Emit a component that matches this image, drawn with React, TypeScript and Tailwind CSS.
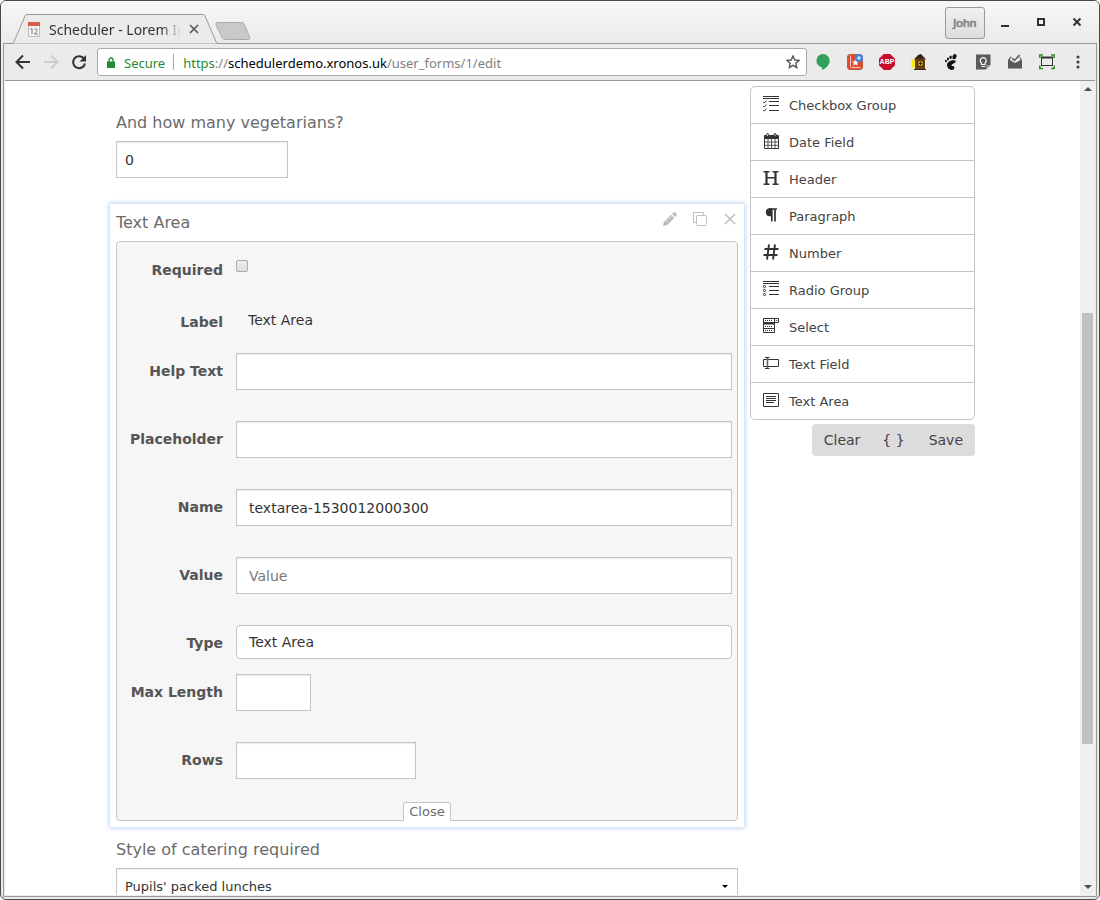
import { useState } from 'react';
import type { ReactNode } from 'react';

const iconProps = { width: 16, height: 16, viewBox: '0 0 16 16', fill: 'none', stroke: '#333' };

const CheckboxGroupIcon = () => (
  <svg {...iconProps}>
    <path d="M0 .5h16M0 2.500h16M6 5.500h10M6 9.500h10M6 14.500h10" />
    <path d="M.3 6l1 1L3.500 4.500M.3 10l1 1 2.200-2.500M.3 14.200l1 1 2.200-2.500" />
  </svg>
);

const CalendarIcon = () => (
  <svg {...iconProps}>
    <path d="M1 3q0-1 1-1h13q1 0 1 1v3H1z" fill="#333" stroke="none" />
    <path d="M1.500 3v12.500h14V3" />
    <path d="M5 6v9M8.500 6v9M12 6v9M2 9h13M2 12.300h13" strokeWidth=".8" />
    <rect x="3.500" y=".5" width="2" height="3" rx="1" fill="#ccc" />
    <rect x="11" y=".5" width="2" height="3" rx="1" fill="#ccc" />
  </svg>
);

const HeaderIcon = () => (
  <svg {...iconProps}>
    <path d="M3.500 1.500v13M12.500 1.500v13" strokeWidth="2.200" />
    <path d="M.5 1.700h6M9.500 1.700h6M.5 14.300h6M9.500 14.300h6M4 7.800h8" strokeWidth="1.400" />
  </svg>
);

const ParagraphIcon = () => (
  <svg {...iconProps}>
    <path d="M9 1.200H6.800a4 4 0 0 0 0 8H9z" fill="#333" stroke="none" />
    <path d="M6 2h8M8.800 2v12.500M12 2v12.500" strokeWidth="1.700" />
  </svg>
);

const NumberIcon = () => (
  <svg {...iconProps}>
    <path d="M6 .5L4 15.500M12 .5l-2 15M1.500 5h14M.5 11h14" strokeWidth="1.900" />
  </svg>
);

const RadioGroupIcon = () => (
  <svg {...iconProps}>
    <path d="M0 .5h16M0 2.500h16M6 5.500h10M6 9.500h10M6 13.500h10" />
    <circle cx="1.500" cy="5.500" r="1.100" />
    <circle cx="1.500" cy="9.500" r="1.100" />
    <circle cx="1.500" cy="13.500" r="1.100" />
  </svg>
);

const SelectIcon = () => (
  <svg {...iconProps}>
    <path d="M.5.5h15v4h-15zM11.500.5v14H.5V4M.5 10.500h11" />
    <path d="M12.500 2h2l-1 1.300z" fill="#333" stroke="none" />
    <path d="M0 5.500h12" strokeWidth="2" />
    <path d="M2 2.500h7M2 8.500h8M2 12.500h8" strokeDasharray="1 1" />
  </svg>
);

const TextFieldIcon = () => (
  <svg {...iconProps}>
    <path d="M.5 4.500h15v7H.5z" />
    <path d="M2 2.500h4.500M2 13.500h4.500" />
    <path d="M4.500 3v10" stroke="#666" strokeWidth="1.600" />
  </svg>
);

const TextAreaIcon = () => (
  <svg {...iconProps}>
    <path d="M.5 1.500h15v13H.5zM3 4.500h10M3 6.500h10M3 8.500h10M3 10.500h8" />
  </svg>
);

const CONTROLS: { label: string; icon: ReactNode }[] = [
  { label: 'Checkbox Group', icon: <CheckboxGroupIcon /> },
  { label: 'Date Field', icon: <CalendarIcon /> },
  { label: 'Header', icon: <HeaderIcon /> },
  { label: 'Paragraph', icon: <ParagraphIcon /> },
  { label: 'Number', icon: <NumberIcon /> },
  { label: 'Radio Group', icon: <RadioGroupIcon /> },
  { label: 'Select', icon: <SelectIcon /> },
  { label: 'Text Field', icon: <TextFieldIcon /> },
  { label: 'Text Area', icon: <TextAreaIcon /> },
];

const EXTENSIONS: { name: string; icon: ReactNode }[] = [
  {
    name: 'Hangouts',
    icon: (
      <svg width="16" height="16" viewBox="0 0 16 16">
        <path d="M8 0a6.700 6.700 0 0 0-1 13.300V16c4-1.800 7.700-5 7.700-9.300A6.700 6.700 0 0 0 8 0z" fill="#31a05a" />
      </svg>
    ),
  },
  {
    name: 'Bookmarks',
    icon: (
      <svg width="16" height="16" viewBox="0 0 16 16">
        <rect x=".5" y=".5" width="15" height="15" rx="2.500" fill="#e2472f" stroke="#b8602f" />
        <path d="M3.500 1.500v11q0 1 1 1h9" stroke="#f3c9bd" fill="none" />
        <path d="M8.500 5l1 2.400 2.500.2-1.900 1.600.6 2.500-2.200-1.400-2.200 1.400.6-2.500L5 7.600l2.500-.2z" fill="#fff" />
        <circle cx="12" cy="4" r="4" fill="#3f85e0" />
        <path d="M12 2v4M10 4h4" stroke="#fff" />
      </svg>
    ),
  },
  {
    name: 'Adblock Plus',
    icon: (
      <span className="flex h-4 w-4 items-center justify-center bg-[#c70d2c] font-['Liberation_Sans',sans-serif] text-[7px] font-bold text-white [clip-path:polygon(30%_0,70%_0,100%_30%,100%_70%,70%_100%,30%_100%,0_70%,0_30%)]">
        ABP
      </span>
    ),
  },
  {
    name: 'Clock house',
    icon: (
      <svg width="16" height="16" viewBox="0 0 16 16">
        <path d="M0 5l3 1 2-1v9l-2-1-3 2 1-4-1-2 1-1z" fill="#f5ec1c" />
        <path d="M10 0l5 5.500H3L7 1z" fill="#3a2410" />
        <path d="M4 5h10v10H4z" fill="#70420f" />
        <path d="M3 15.500h12" stroke="#3a2410" />
        <rect x="7" y="7" width="5" height="5" fill="#d8bf2a" stroke="#3a2410" strokeWidth=".8" />
        <path d="M9.500 8v3M8 9.500h3" stroke="#3a2410" />
      </svg>
    ),
  },
  {
    name: 'GNOME',
    icon: (
      <svg width="16" height="16" viewBox="0 0 16 16" fill="#111">
        <ellipse cx="11.500" cy="2.600" rx="1.900" ry="2.700" transform="rotate(25 11.500 2.600)" />
        <ellipse cx="7.600" cy="3.300" rx="1.200" ry="1.800" />
        <ellipse cx="5" cy="4.900" rx="1" ry="1.500" transform="rotate(-15 5 4.900)" />
        <ellipse cx="3" cy="7" rx=".9" ry="1.300" transform="rotate(-25 3 7)" />
        <path d="M12.500 6.800C10.500 5.200 4 7.200 4 10.800c0 3 2.500 5.200 4.700 5.200 2 0 3.300-1.800 2.500-3.200-.6-1-1.900-.4-2.500-1-.7-.8.200-1.600 1.500-2.100 1.600-.6 3.200-1.800 2.300-2.900z" />
      </svg>
    ),
  },
  {
    name: 'Keep',
    icon: (
      <svg width="16" height="16" viewBox="0 0 16 16">
        <path d="M1 .5h14.500v10.500l-4.500 4.500H1z" fill="#5a5a5a" />
        <path d="M11 15.500V11h4.500z" fill="#999" />
        <path d="M6.500 10.500V9a3 3 0 1 1 3.500 0v1.500zM6.500 12.500H10" fill="none" stroke="#fff" strokeWidth="1.200" />
      </svg>
    ),
  },
  {
    name: 'Inbox',
    icon: (
      <svg width="16" height="16" viewBox="0 0 16 16">
        <path d="M1 6l2.500-3.500h9L15 6v8.500H1z" fill="#595959" />
        <path d="M2.800 6L5 1.500h6.500L13.500 6 8 9z" fill="#eee" />
        <path d="M5 4l2.500 2.500L12.500 1" fill="none" stroke="#595959" strokeWidth="1.500" />
      </svg>
    ),
  },
  {
    name: 'Window resizer',
    icon: (
      <svg width="16" height="16" viewBox="0 0 16 16" fill="none">
        <rect x="2.500" y="3.500" width="11" height="8" stroke="#333" />
        <path d="M2 3.500h12" stroke="#333" strokeWidth="2" />
        <path d="M.8 4V1H4M12 1h3.200v3M15.200 11.500v3H12M4 14.500H.8v-3" stroke="#3b8c2e" strokeWidth="1.600" />
      </svg>
    ),
  },
];

const TitleBar = () => (
  <header className="flex h-[42px] items-end bg-linear-to-b from-[#f7f7f7] to-[#ebebeb] pl-[11px]">
    <div className="relative flex h-[29px] w-[206px] shrink-0 items-center pr-4 pl-[14px]">
      <svg className="absolute bottom-[-1px] left-0" width="206" height="30" viewBox="0 0 206 30" fill="#ebebeb">
        <path d="M0 29.500q1.500-.5 2-2L13 2q.5-1.500 2-1.500h176q1.500 0 2 1.500l11 25.500q.5 1.500 2 2" stroke="#999" />
      </svg>
      <svg className="relative shrink-0" width="16" height="16" viewBox="0 0 16 16">
        <path d="M2.500 1.500h11v14h-11z" fill="#f3f3f3" stroke="#bbb" />
        <path d="M2 1h12v4H2z" fill="#e0584a" />
        <path d="M4.500 8.500L6 7.500v5.500M8.500 8.500q2-2 2.500 0T8.500 13h3.500" fill="none" stroke="#777" />
      </svg>
      <h1 className="relative ml-[7px] h-5 w-[132px] overflow-hidden text-[14px] leading-[22px] whitespace-nowrap text-[#333] [mask-image:linear-gradient(to_right,black_85%,transparent)]">
        Scheduler - Lorem Ip
      </h1>
      <button aria-label="Close tab" className="relative ml-2">
        <svg width="10" height="10" viewBox="0 0 10 10" stroke="#555" strokeWidth="1.600">
          <path d="M1 1l8 8M9 1L1 9" />
        </svg>
      </button>
    </div>
    <button aria-label="New tab" className="mb-[3px] ml-[-3px]">
      <svg width="36" height="18" viewBox="0 0 36 18">
        <path d="M2.500.5h24q2 0 3 2l5 12.500q1 2.500-1 2.500H10q-2 0-3-2L1 3Q.5.5 2.500.5z" fill="#c9c9c9" stroke="#aaa" />
      </svg>
    </button>
    <div className="ml-auto flex items-center self-start pt-[6px] pr-[14px]">
      <button className="mr-3 h-8 w-10 rounded-[3px] border border-[#999] bg-linear-to-b from-[#f0f0f0] to-[#dedede] text-[11px] text-[#888] [text-shadow:0_0_1px_#333]">
        John
      </button>
      <button aria-label="Minimise" className="flex w-4 justify-center">
        <svg width="10" height="10" viewBox="0 0 10 10">
          <path d="M1 8h8" stroke="#2e3436" strokeWidth="2" />
        </svg>
      </button>
      <button aria-label="Maximise" className="ml-5 flex w-4 justify-center">
        <svg width="10" height="10" viewBox="0 0 10 10" fill="none">
          <rect x="2" y="1" width="6" height="6" stroke="#2e3436" strokeWidth="2" />
        </svg>
      </button>
      <button aria-label="Close" className="ml-5 flex w-4 justify-center">
        <svg width="10" height="10" viewBox="0 0 10 10">
          <path d="M1.500.5l7 7M8.500.5l-7 7" stroke="#2e3436" strokeWidth="2" />
        </svg>
      </button>
    </div>
  </header>
);

const navButton = 'flex h-7 w-7 items-center justify-center';

const Toolbar = () => (
  <nav className="flex h-[37px] shrink-0 items-center border-b border-[#999] bg-[#ebebeb] pl-1">
    <button aria-label="Back" className={navButton}>
      <svg width="16" height="16" viewBox="0 0 16 16" fill="none" stroke="#333" strokeWidth="2">
        <path d="M15 8H2M8 1.500L1.500 8 8 14.500" />
      </svg>
    </button>
    <button aria-label="Forward" disabled className={navButton}>
      <svg width="16" height="16" viewBox="0 0 16 16" fill="none" stroke="#ccc" strokeWidth="2">
        <path d="M1 8h13M8 1.500L14.500 8 8 14.500" />
      </svg>
    </button>
    <button aria-label="Reload" className={navButton}>
      <svg width="16" height="16" viewBox="0 0 16 16" fill="none">
        <path d="M14 9.500A6 6 0 1 1 12.500 4" stroke="#333" strokeWidth="2" />
        <path d="M15 1v6.500H8.500z" fill="#333" />
      </svg>
    </button>
    <div className="ml-1 flex h-7 flex-1 items-center rounded-[3px] border border-[#aaa] bg-white pr-[6px] pl-[9px] text-[13px] leading-5">
      <svg width="8" height="11" viewBox="0 0 8 11">
        <path d="M0 4.500h8V11H0z" fill="#1f8a34" />
        <path d="M2 5V3a2 2 0 0 1 4 0v2" fill="none" stroke="#1f8a34" strokeWidth="1.300" />
      </svg>
      <span className="ml-[9px] pt-px text-[#1f8a34]">Secure</span>
      <span className="mr-[9px] ml-2 h-4 w-px bg-[#aaa]" />
      <span className="flex-1 pt-px whitespace-nowrap text-[#808080]">
        <span className="text-[#1f8a34]">https</span>://<span className="text-black">schedulerdemo.xronos.uk</span>
        /user_forms/1/edit
      </span>
      <button aria-label="Bookmark this page">
        <svg width="14" height="14" viewBox="0 0 14 14" fill="none" stroke="#555" strokeWidth="1.400">
          <path d="M7 1l1.800 4 4.200.4-3.200 2.900.9 4.200L7 10.300l-3.700 2.200.9-4.200L1 5.400 5.200 5z" />
        </svg>
      </button>
    </div>
    {EXTENSIONS.map(({ name, icon }) => (
      <button key={name} aria-label={name} className="flex w-8 justify-center">
        {icon}
      </button>
    ))}
    <button aria-label="Menu" className="mr-[3px] flex w-[29px] justify-center">
      <svg width="4" height="14" viewBox="0 0 4 14" fill="#444">
        <circle cx="2" cy="2" r="1.600" />
        <circle cx="2" cy="7" r="1.600" />
        <circle cx="2" cy="12" r="1.600" />
      </svg>
    </button>
  </nav>
);

interface FieldRowProps {
  id: string;
  label: string;
  children: ReactNode;
  compact?: boolean;
}

const FieldRow = ({ id, label, children, compact = false }: FieldRowProps) => (
  <div className={compact ? 'flex h-[49px] items-start' : 'flex h-[68px] items-start'}>
    <label
      htmlFor={id}
      className="mr-[13px] w-[106px] shrink-0 text-right text-[14px] leading-9 font-bold text-[#555]"
    >
      {label}
    </label>
    {children}
  </div>
);

const inputClass =
  'h-[37px] border border-[#c5c5c5] bg-white px-3 text-[14px] text-[#333] shadow-[inset_0_1px_1px_rgba(0,0,0,0.08)] outline-none placeholder:text-[#777]';

const FieldEditor = () => {
  const [required, setRequired] = useState(false);
  const [name, setName] = useState('textarea-1530012000300');

  return (
    <section className="mt-[26px] bg-white px-[6px] pb-[6px] shadow-[0_0_5px_1px_#b5d5f5]">
      <div className="flex h-[37px] items-center justify-between">
        <h2 className="text-[16px] text-[#6b6b6b]">Text Area</h2>
        <div className="flex items-center gap-4 pr-px pb-2">
          <button aria-label="Edit">
            <svg width="14" height="14" viewBox="0 0 14 14" fill="#bbb">
              <path d="M0 14l.8-4L8 2.800 11.200 6 4 13.200zM9 2l1.700-1.600q.6-.6 1.300 0l1.600 1.600q.6.7 0 1.300L12 5z" />
              <path d="M2.500 10l6-6" stroke="#fff" strokeWidth=".5" />
            </svg>
          </button>
          <button aria-label="Duplicate">
            <svg width="14" height="14" viewBox="0 0 14 14" fill="none" stroke="#c0c0c0">
              <path d="M3 10.500H.5V.5h10V3" />
              <rect x="3.500" y="3.500" width="10" height="10" rx="1" />
            </svg>
          </button>
          <button aria-label="Remove">
            <svg width="14" height="14" viewBox="0 0 14 14" stroke="#c0c0c0" strokeWidth="1.600">
              <path d="M2 2l10 10M12 2L2 12" />
            </svg>
          </button>
        </div>
      </div>

      <div className="rounded-[4px] border border-[#c5c5c5] bg-[#f6f6f6] pt-[10px] pr-[5px]">
        <div className="pb-[3px]">
          <FieldRow id="required" label="Required" compact>
            <input
              id="required"
              type="checkbox"
              checked={required}
              onChange={(e) => setRequired(e.target.checked)}
              className="mt-2 h-3 w-3 appearance-none rounded-[2px] border border-[#aaa] bg-linear-to-b from-[#eee] to-[#ddd] checked:bg-[#666]"
            />
          </FieldRow>
        </div>
        <FieldRow id="label" label="Label" compact>
          <input
            id="label"
            defaultValue="Text Area"
            className="h-8 min-w-0 flex-1 bg-transparent px-3 text-[14px] text-[#333] outline-none"
          />
        </FieldRow>
        <FieldRow id="help" label="Help Text">
          <input id="help" className={`${inputClass} min-w-0 flex-1`} />
        </FieldRow>
        <FieldRow id="placeholder" label="Placeholder">
          <input id="placeholder" className={`${inputClass} min-w-0 flex-1`} />
        </FieldRow>
        <FieldRow id="name" label="Name">
          <input
            id="name"
            value={name}
            onChange={(e) => setName(e.target.value)}
            className={`${inputClass} min-w-0 flex-1`}
          />
        </FieldRow>
        <FieldRow id="value" label="Value">
          <input id="value" placeholder="Value" className={`${inputClass} min-w-0 flex-1`} />
        </FieldRow>
        <FieldRow id="type" label="Type" compact>
          <select
            id="type"
            className="h-[34px] min-w-0 flex-1 appearance-none rounded-[4px] border border-[#c5c5c5] bg-white px-3 text-[14px] text-[#333]"
          >
            <option>Text Area</option>
          </select>
        </FieldRow>
        <FieldRow id="maxlength" label="Max Length">
          <input id="maxlength" className={`${inputClass} w-[75px]`} />
        </FieldRow>
        <FieldRow id="rows" label="Rows">
          <input id="rows" className={`${inputClass} w-[180px]`} />
        </FieldRow>
        {/* sits on the panel's bottom border */}
        <div className="-mt-2 -mb-px flex justify-center pl-[5px]">
          <button className="h-[19px] w-12 rounded-t-[3px] border border-b-0 border-[#c5c5c5] bg-white text-[13px] leading-[18px] text-[#6b6b6b]">
            Close
          </button>
        </div>
      </div>
    </section>
  );
};

const FormStage = () => (
  <main className="min-w-0 flex-1">
    <div className="px-[6px] pt-[30px]">
      <label htmlFor="vegetarians" className="block text-[16px] leading-6 text-[#6b6b6b]">
        And how many vegetarians?
      </label>
      <input
        id="vegetarians"
        defaultValue="0"
        className="mt-[6px] block h-[37px] w-[172px] border border-[#c5c5c5] bg-white px-2 text-[14px] text-[#333] shadow-[inset_0_1px_1px_rgba(0,0,0,0.08)] outline-none"
      />
    </div>
    <FieldEditor />
    <div className="px-[6px] pt-[11px]">
      <label htmlFor="catering" className="block text-[16px] leading-6 text-[#6b6b6b]">
        Style of catering required
      </label>
      <div className="relative mt-[6px]">
        <select
          id="catering"
          className="h-[38px] w-full appearance-none border border-[#c5c5c5] bg-white px-2 text-[13px] text-[#333] shadow-[inset_0_1px_1px_rgba(0,0,0,0.08)]"
        >
          <option>Pupils&apos; packed lunches</option>
        </select>
        <svg className="pointer-events-none absolute top-4 right-[10px]" width="6" height="4" viewBox="0 0 6 4">
          <path d="M0 1h6L3 4z" />
        </svg>
      </div>
    </div>
  </main>
);

const ControlPanel = () => (
  <aside className="w-[225px] shrink-0 pt-[5px]">
    <ul className="divide-y divide-[#c5c5c5] rounded-[5px] border border-[#c5c5c5] bg-white">
      {CONTROLS.map(({ label, icon }) => (
        <li key={label}>
          <button className="flex h-9 w-full items-center px-3 pt-px text-[13px] text-[#444]">
            <span className="mr-[10px] pb-1">{icon}</span>
            {label}
          </button>
        </li>
      ))}
    </ul>
    <div className="mt-1 ml-auto flex h-8 w-fit rounded-[4px] bg-[#dcdcdc] text-[14px] text-[#444]">
      <button className="pr-[10px] pl-3">Clear</button>
      <button className="px-3">{'{ }'}</button>
      <button className="px-3">Save</button>
    </div>
  </aside>
);

const Scrollbar = () => (
  <div aria-hidden="true" className="flex w-[15px] shrink-0 flex-col items-center bg-[#f0f0f0]">
    <svg className="my-[5px] shrink-0" width="8" height="5" viewBox="0 0 8 5" fill="#4d4d4d">
      <path d="M0 5h8L4 1z" />
    </svg>
    <div className="flex-[217]" />
    <div className="w-[11px] flex-[431] bg-[#c1c1c1]" />
    <div className="flex-[136]" />
    <svg className="my-[5px] shrink-0" width="8" height="5" viewBox="0 0 8 5" fill="#4d4d4d">
      <path d="M0 0h8L4 4z" />
    </svg>
  </div>
);

export default function App() {
  return (
    <div className="h-screen bg-white">
      <div className="flex h-full flex-col overflow-hidden rounded-[6px] border border-[#4a4a4a] bg-[#ebebeb] font-['Noto_Sans',sans-serif]">
        <TitleBar />
        <div className="mx-[2px] mb-[2px] flex min-h-0 flex-1 flex-col border border-[#999] px-px pb-px">
          <Toolbar />
          <div className="flex min-h-0 flex-1 bg-white font-['DejaVu_Sans',sans-serif]">
            <div className="min-w-0 flex-1 overflow-hidden">
              <div className="mx-auto flex max-w-[865px] gap-[6px]">
                <FormStage />
                <ControlPanel />
              </div>
            </div>
            <Scrollbar />
          </div>
        </div>
      </div>
    </div>
  );
}
